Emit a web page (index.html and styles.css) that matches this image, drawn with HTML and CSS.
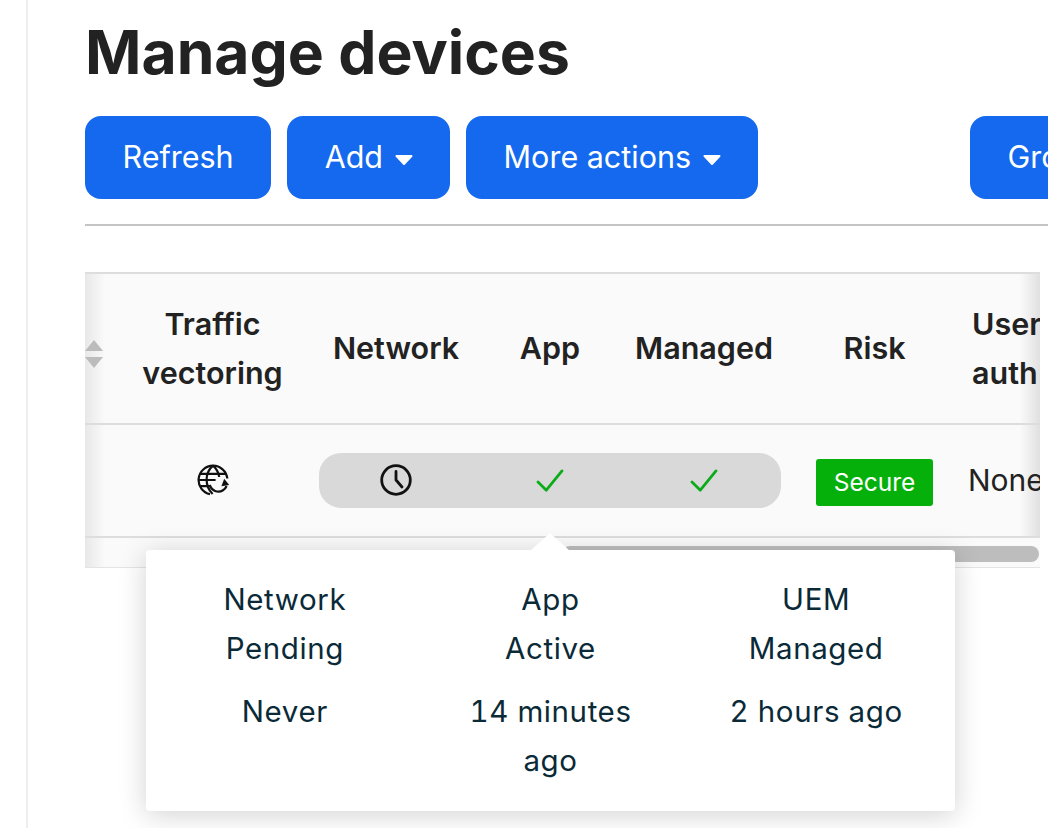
FILE: index.html
```html
<!DOCTYPE html>
<html lang="en">
<head>
<meta charset="utf-8">
<title>Manage devices</title>
<link rel="stylesheet" href="styles.css">
</head>
<body>
<main class="main">
  <h1 class="title">Manage devices</h1>
  <div class="toolbar">
    <button class="btn">Refresh</button>
    <button class="btn">Add <svg class="caret" viewBox="0 0 18 10"><path d="M1.5 1h15L9 9z" fill="#fff" stroke="#fff" stroke-width="2" stroke-linejoin="round"/></svg></button>
    <button class="btn">More actions <svg class="caret" viewBox="0 0 18 10"><path d="M1.5 1h15L9 9z" fill="#fff" stroke="#fff" stroke-width="2" stroke-linejoin="round"/></svg></button>
    <button class="btn btn-far">Groups</button>
  </div>
  <div class="table-wrap">
    <div class="table">
      <div class="shade shade-left"></div>
      <div class="shade shade-right"></div>
      <div class="row head">
        <div class="sort">
          <svg viewBox="0 0 18 28" width="18" height="28"><path d="M9 0l9 11H0zM0 17h18L9 28z" fill="#bcbcbc"/></svg>
        </div>
        <div class="cell">Traffic<br>vectoring</div>
        <div class="cell">Network</div>
        <div class="cell">App</div>
        <div class="cell">Managed</div>
        <div class="cell">Risk</div>
        <div class="cell left head-left">User<br>auth</div>
      </div>
      <div class="row body">
        <div></div>
        <div class="cell">
          <svg class="ico" viewBox="0 0 32 32" fill="none" stroke="#111" stroke-width="2.2">
            <path d="M13 30.2A14.4 14.4 0 1 1 30.3 14.5"/>
            <path d="M16 1.6c-4.5 3.8-6.4 8.6-6.4 14 0 5.600 2 10.600 6 14.400"/>
            <path d="M16 1.600c3.700 3.300 5.700 7 6.200 11.400"/>
            <path d="M3 9.800h26M1.600 16h17M3 22.200h9"/>
            <path d="M12.500 21c2.200 5.500 8.200 8.500 13.500 5.300 1.800-1.100 2.800-2.400 3.600-4.300"/>
            <path d="M27.200 14.800l5 6.200-7.800 1.300z" fill="#111" stroke="none"/>
          </svg>
        </div>
        <div class="pill">
          <span class="pill-cell">
            <svg class="ico" viewBox="0 0 32 32" fill="none" stroke="#111" stroke-width="2.800" stroke-linecap="round"><circle cx="16" cy="16" r="14.300"/><path d="M16 7.500v8.500l6 7"/></svg>
          </span>
          <span class="pill-cell">
            <svg class="check" viewBox="0 0 30 26" fill="none" stroke="#0bab1a" stroke-width="3" stroke-linecap="round" stroke-linejoin="round"><path d="M2 14l9 9L28 2"/></svg>
          </span>
          <span class="pill-cell">
            <svg class="check" viewBox="0 0 30 26" fill="none" stroke="#0bab1a" stroke-width="3" stroke-linecap="round" stroke-linejoin="round"><path d="M2 14l9 9L28 2"/></svg>
          </span>
        </div>
        <div class="cell"><span class="badge">Secure</span></div>
        <div class="cell left body-left">None</div>
      </div>
      <div class="scroll"><div class="thumb"></div></div>
    </div>
    <div class="tooltip">
      <div class="tip-col">
        <div class="tip-state">Network<br>Pending</div>
        <div>Never</div>
      </div>
      <div class="tip-col">
        <div class="tip-state">App<br>Active</div>
        <div>14 minutes ago</div>
      </div>
      <div class="tip-col">
        <div class="tip-state">UEM<br>Managed</div>
        <div>2 hours ago</div>
      </div>
    </div>
  </div>
</main>
</body>
</html>
```
FILE: styles.css
```css
* { box-sizing: border-box; }
html, body { margin: 0; height: 100%; overflow: hidden; background: #fff; }
body { font-family: Inter, "Liberation Sans", sans-serif; color: #222; }
.main {
  margin-left: 26px;
  height: 828px;
  width: 1400px;
  border-left: 2px solid #eee;
  padding-left: 57px;
}
.title {
  margin: 0;
  padding-top: 14px;
  height: 116px;
  font-size: 60.6px;
  line-height: 76px;
  font-weight: 700;
  color: #222;
}
.toolbar {
  display: flex;
  gap: 16px;
  padding-bottom: 25px;
  border-bottom: 2px solid #c4c4c4;
}
.btn {
  height: 83px;
  padding: 0 37.5px 2px;
  border: 0;
  border-radius: 16px;
  background: #1469ee;
  color: #fff;
  font: 400 30.5px Inter, sans-serif;
  display: flex;
  align-items: center;
  gap: 11.5px;
}
.btn-far { margin-left: 196px; }
.caret { width: 18px; height: 10px; margin-top: 6px; }
.table-wrap { position: relative; margin-top: 46px; width: 955px; }
.table {
  position: relative;
  overflow: hidden;
  background: #fafafa;
  border-top: 2px solid #ddd;
  height: 296px;
}
.row {
  position: relative;
  display: grid;
  grid-template-columns: 21px 213px 154px 154px 154px 187px 120px;
  align-items: center;
  text-align: center;
}
.head {
  height: 151px;
  padding-bottom: 2px;
  border-bottom: 2px solid #ddd;
  font-size: 30.5px;
  line-height: 49px;
  font-weight: 600;
}
.body {
  height: 113px;
  border-bottom: 2px solid #ddd;
  font-size: 30px;
}
.sort { display: flex; padding-top: 13px; }
.left { text-align: left; white-space: nowrap; }
.head-left { padding-left: 4px; }
.body-left { padding-bottom: 2px; }
.ico { width: 32px; height: 32px; display: block; margin: -2px auto 0; }
.check { width: 28px; height: 24px; display: block; margin: 0 auto; }
.pill {
  grid-column: span 3;
  display: grid;
  grid-template-columns: repeat(3, 1fr);
  align-items: center;
  height: 55px;
  border-radius: 22px;
  background: #d9d9d9;
}
.badge {
  display: block;
  width: 117px;
  height: 47px;
  margin: 4px auto 0;
  line-height: 47px;
  border-radius: 3px;
  background: #06b00b;
  color: #fff;
  font-size: 24.5px;
}
.scroll {
  position: relative;
  height: 30px;
  padding: 8px 1px 0 0;
  border-bottom: 1px solid #e4e4e4;
  display: flex;
  justify-content: flex-end;
}
.thumb { width: 477px; height: 16px; border-radius: 8px; background: #bdbdbd; }
.shade { position: absolute; top: 0; bottom: 0; width: 20px; }
.shade-left { left: 0; background: linear-gradient(to right, #e8e8e8, rgba(232,232,232,0)); }
.shade-right { right: 0; bottom: 30px; background: linear-gradient(to left, #e0e0e0, rgba(224,224,224,0)); }
.tooltip {
  position: absolute;
  left: 61px;
  top: 278px;
  width: 809px;
  height: 261px;
  padding: 25px 6px 0;
  display: grid;
  grid-template-columns: repeat(3, 1fr);
  background: #fff;
  border-radius: 4px;
  box-shadow: 0 4px 28px rgba(0, 0, 0, .18);
  text-align: center;
  color: #0a2a38;
  font-size: 29.5px;
  font-variant-numeric: tabular-nums;
  letter-spacing: .6px;
  line-height: 48.7px;
}
.tooltip::before {
  content: "";
  position: absolute;
  left: 384px;
  top: -17px;
  width: 40px;
  height: 18px;
  background: #fff;
  clip-path: polygon(50% 0, 100% 100%, 0 100%);
}
.tip-col { padding: 0 42px; }
.tip-state { margin-bottom: 15px; }
```
